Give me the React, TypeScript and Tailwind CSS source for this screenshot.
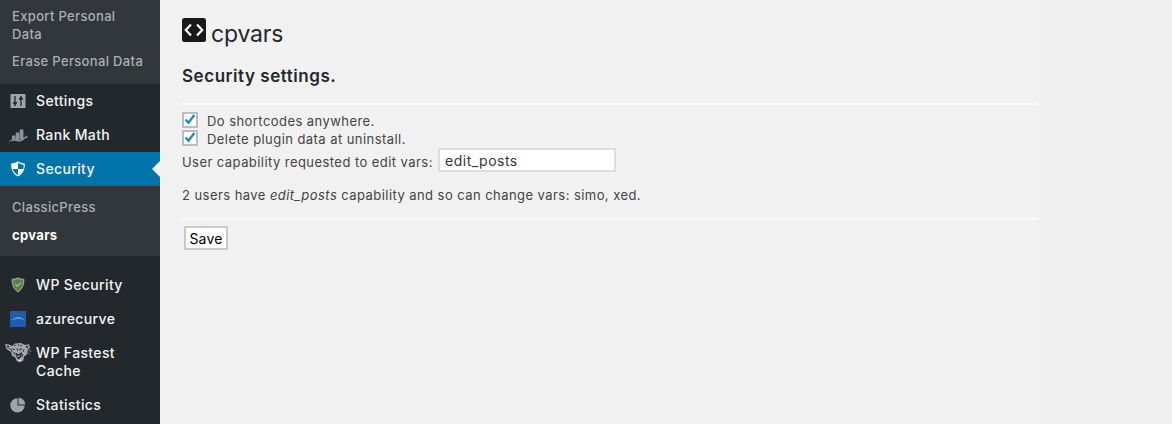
import type { ReactNode } from "react";

function SlidersIcon() {
  return (
    <svg width="16" height="16" viewBox="0 0 16 16">
      <rect x="0.500" y="1" width="15" height="14" rx="0.600" fill="#a0a5aa" />
      <path d="M5 3v10M11 3v10" stroke="#23282d" strokeWidth="1.300" />
      <path d="M3 9h4v1.200L5 12 3 10.200zM9 6.800h4V5.600L11 3.600 9 5.600z" fill="#23282d" />
    </svg>
  );
}

function RankIcon() {
  return (
    <svg width="20" height="16" viewBox="0 0 20 16">
      <path d="M4 8.500h3.400v5H4zM7.800 5.500h3.600v8H7.800zM11.800 2.500h3.600v10h-3.600z" fill="#8f9499" />
      <path d="M0.500 14c3-.2 4-3 6-2.700s3 2.400 5.500 1.700 3-2.500 6-3.700l-.3-1.300 2 1.600-1 2.200-.3-1c-2 .8-3 3.200-6 3.700s-4-.9-6-1.100-3 1.300-5.900.6z" fill="#858b90" />
    </svg>
  );
}

function ShieldIcon() {
  return (
    <svg width="16" height="18" viewBox="0 0 16 18">
      <path d="M8 1.200c1.700 1.400 4 2.200 6.800 2.200.2 6-1.800 10.300-6.800 13.200C3 13.700 1 9.400 1.200 3.400 4 3.400 6.300 2.600 8 1.200z" fill="#fff" />
      <path d="M8 2.800C9.500 4 11.300 4.600 13.600 4.700c.1 1.600 0 2.900-.3 4.300H8z" fill="#0073aa" />
      <path d="M8 9H2.700c.8 2.700 2.500 4.700 5.300 6.300z" fill="#0073aa" />
    </svg>
  );
}

function GreenShieldIcon() {
  return (
    <svg width="14" height="16" viewBox="0 0 14 16">
      <path d="M7 .2c2 1.300 4 1.600 6.300 1.600.4 6-1.500 10.600-6.300 13.700C2.200 12.400.3 7.800.7 1.800 3 1.800 5 1.500 7 .2z" fill="#959b96" />
      <path d="M7 1.900c1.500.9 3 1.200 4.900 1.300.1 4.900-1.300 8.200-4.900 10.700C3.400 11.400 2 8.100 2.100 3.200 4 3.100 5.500 2.800 7 1.900z" fill="#55823f" />
      <path d="M4.300 7l2.200 2.200 3.400-3.900" stroke="#a9bb9c" strokeWidth="1.200" fill="none" />
    </svg>
  );
}

function AzureIcon() {
  return (
    <svg width="16" height="16" viewBox="0 0 16 16">
      <path d="M0 0h16v16H0z" fill="#1e5cb3" />
      <path d="M1 8.500c3-.3 5-2.800 8-2.400 2.800.4 4.200 1.600 6 3.200-3-.9-4.500-1.700-7-1.500S4 9.400 1 8.500z" fill="#6d9bc5" />
    </svg>
  );
}

function CheetahIcon() {
  return (
    <svg width="28" height="22" viewBox="0 0 28 22">
      <path d="M1 2l4 .5L8 4l3-2.500 6-.5 4 2 4-.8 1 3.300-2 2-1 5-3 2-.6 4-3.400 1.800-3-1-2-4-3-1.500L7 10 2.500 7z" fill="#a5a8aa" />
      <path d="M2.500 3.500l3 .8-1.500 2zM21.500 4.500l3-1-1 3z" fill="#23282d" />
      <path d="M8 6l3 1.500-1.500.8zM14 8l4-2-1 2.300zM11.500 10.500l3 2 3.500-2.700-.6 5-3 2.600-2.200-3z" fill="#202326" />
      <path d="M10 3l2 1M15 2l-1 2M18 3l-2 1.500M7 7l1 3M20 7l-1 3M13 6l.5 3M9.500 10l1.500 3M5 6l2 2M19 12l-1 3M24 10l2-3M24 12l2-1" stroke="#3b4044" strokeWidth="1" />
      <path d="M13 13.500l1.300 1.500 1.700-1.800M14 18.500h3" stroke="#d5d7d8" fill="none" />
      <path d="M25 7l2 3M24 11l1.500 1" stroke="#777b7e" />
    </svg>
  );
}

function PieIcon() {
  return (
    <svg width="16" height="16" viewBox="0 0 16 16">
      <path d="M7.500 1.200v7.300h7.200A7.200 7.200 0 1 1 7.500 1.200z" fill="#a0a5aa" />
      <path d="M8.500.8a7 7 0 0 1 6.800 6.800H8.500z" fill="#a0a5aa" />
    </svg>
  );
}

function MenuItem({ icon, children, active }: { icon: ReactNode; children: ReactNode; active?: boolean }) {
  return (
    <a className={`flex items-start text-[14px] leading-[18px] font-medium tracking-[0.36px] text-[#f3f4f4] py-2 ${active ? "relative bg-[#0073aa]" : ""}`}>
      <span className="flex h-[18px] w-9 shrink-0 items-center justify-center">{icon}</span>
      <span className="w-[100px]">{children}</span>
      {active && <span className="absolute top-[9px] right-0 border-y-8 border-r-8 border-y-transparent border-r-[#f1f1f1]" />}
    </a>
  );
}

function Checkbox() {
  return (
    <span className="flex size-4 shrink-0 items-center justify-center border-2 border-[#b9bec2] bg-white">
      <svg width="12" height="12" viewBox="0 0 12 12">
        <path d="M1.500 5.500l3 3.200 5.800-7.700" fill="none" stroke="#2585b5" strokeWidth="2.300" />
      </svg>
    </span>
  );
}

function Divider() {
  return <div className="h-[3px] w-[856px] border-t border-[#f5f5f5] bg-[#fafafa]" />;
}

export default function App() {
  return (
    <div className="flex h-[424px] w-[1172px] overflow-hidden bg-[#efefef] font-['Inter',sans-serif]">
      <nav className="h-[424px] w-40 shrink-0 bg-[#23282d]">
        <div className="h-[84px] bg-[#32373c] pt-[7px] pl-3 text-[13px] leading-[18px] font-medium tracking-[0.34px] text-[#a9afb4]">
          <div className="w-[120px]">Export Personal Data</div>
          <div className="mt-[9px] whitespace-nowrap">Erase Personal Data</div>
        </div>
        <MenuItem icon={<SlidersIcon />}>Settings</MenuItem>
        <MenuItem icon={<RankIcon />}>Rank Math</MenuItem>
        <MenuItem icon={<ShieldIcon />} active>Security</MenuItem>
        <div className="mb-3 h-[70px] bg-[#32373c] pt-3 pl-3 text-[13px] leading-[18px] font-medium tracking-[0.34px] text-[#a9afb4]">
          <div>ClassicPress</div>
          <div className="mt-[10px] font-bold text-white">cpvars</div>
        </div>
        <MenuItem icon={<GreenShieldIcon />}>WP Security</MenuItem>
        <MenuItem icon={<AzureIcon />}>azurecurve</MenuItem>
        <MenuItem icon={<CheetahIcon />}>WP Fastest Cache</MenuItem>
        <MenuItem icon={<PieIcon />}>Statistics</MenuItem>
      </nav>
      <main className="w-[880px] bg-[#f1f1f1] pl-[22px] text-[13px] tracking-[0.440px] text-[#444]">
        <h1 className="flex h-[52px] items-start gap-[5px] pt-[18px] text-[23px] leading-[32px] tracking-[-0.160px] text-[#23282d]">
          <svg width="24" height="24" viewBox="0 0 24 24">
            <rect width="24" height="24" rx="2.500" fill="#191919" />
            <path d="M9 6.500L3.800 12 9 17.500M15 6.500l5.200 5.500-5.200 5.500" fill="none" stroke="#fff" strokeWidth="2.200" />
          </svg>
          <span>cpvars</span>
        </h1>
        <h2 className="mt-3 h-[38px] text-[17px] leading-6 font-semibold tracking-[0.540px] text-[#23282d]">Security settings.</h2>
        <Divider />
        <div className="mt-[7px] flex h-[18px] gap-[9px] leading-[19px]"><Checkbox />Do shortcodes anywhere.</div>
        <div className="flex h-[18px] gap-[9px] leading-[19px]"><Checkbox />Delete plugin data at uninstall.</div>
        <label className="flex h-6 items-center gap-1">
          <span className="w-[252px] pt-[5px] whitespace-nowrap">User capability requested to edit vars:</span>
          <input readOnly defaultValue="edit_posts" className="h-6 w-[178px] border-2 border-[#ddd] bg-white px-[5px] text-[14px] tracking-[0.500px] text-[#32373c] outline-none" />
        </label>
        <p className="mt-[14px] h-[31px] leading-[19px]">2 users have <em>edit_posts</em> capability and so can change vars: simo, xed.</p>
        <Divider />
        <button className="mt-[6px] ml-[2px] flex h-6 w-11 items-center justify-center border-2 border-[#c9c9c9] bg-white text-[14px] tracking-[0.200px] text-black">Save</button>
      </main>
    </div>
  );
}
